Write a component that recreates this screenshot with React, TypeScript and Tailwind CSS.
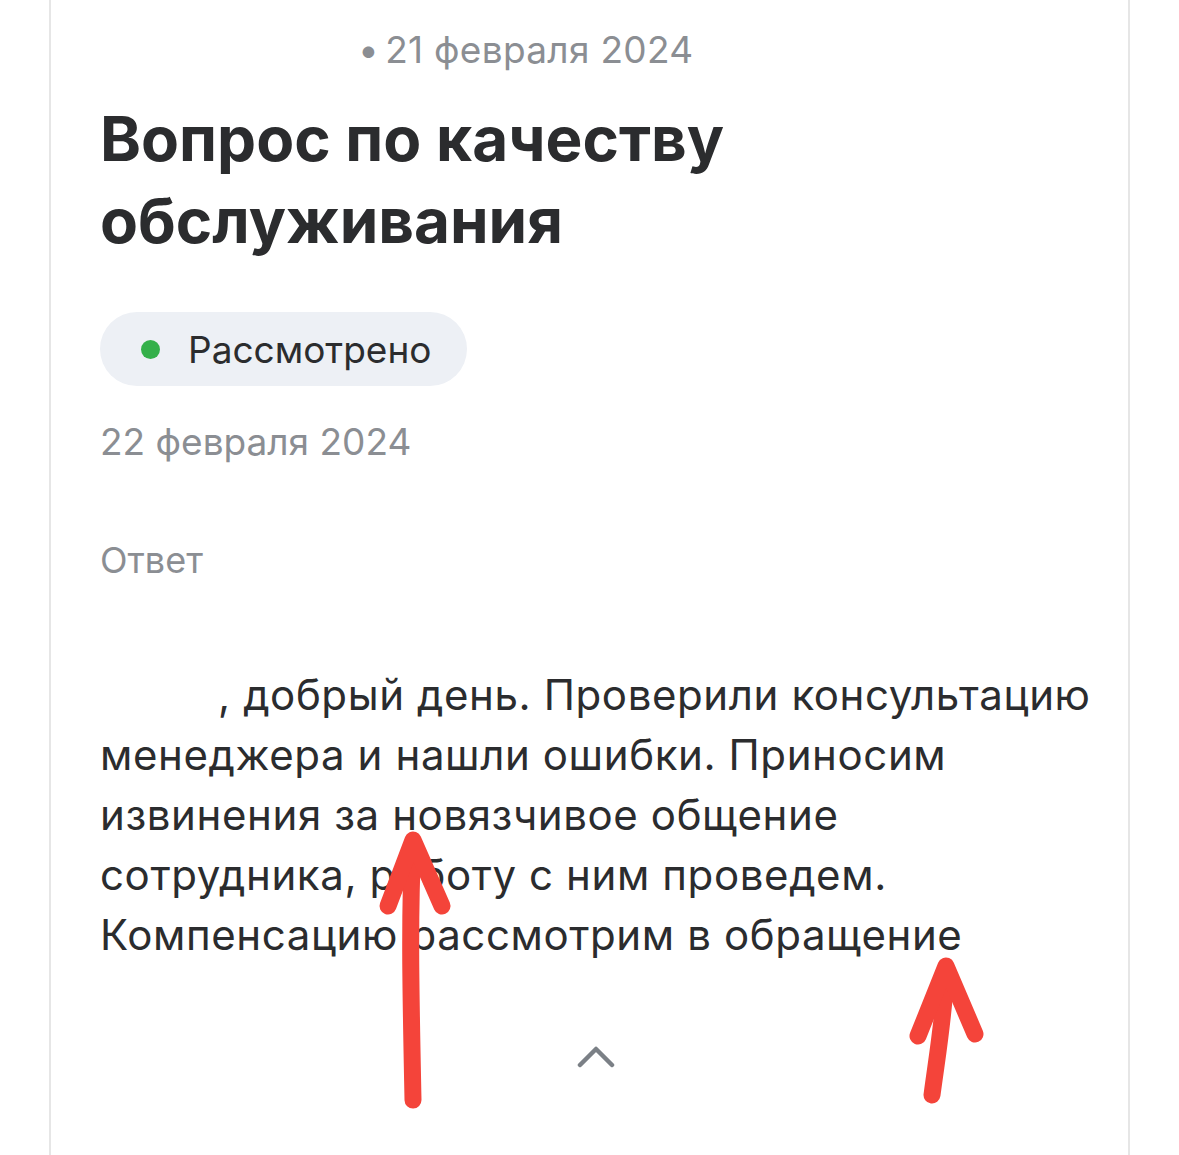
const answerLines = [
  "добрый день. Проверили консультацию",
  "менеджера и нашли ошибки. Приносим",
  "извинения за новязчивое общение",
  "сотрудника, работу с ним проведем.",
  "Компенсацию рассмотрим в обращение",
];

function ChevronUp() {
  return (
    <svg width="38" height="24" viewBox="0 0 38 24" fill="none">
      <path
        d="M3 20 L19 4 L35 20"
        stroke="#7b8086"
        strokeWidth="4.5"
        strokeLinecap="round"
        strokeLinejoin="round"
      />
    </svg>
  );
}

function Scribbles() {
  return (
    <svg
      className="pointer-events-none absolute left-0 top-0"
      width="1179"
      height="1155"
      viewBox="0 0 1179 1155"
      fill="none"
    >
      <g stroke="#f4443a" strokeWidth="17" strokeLinecap="round" strokeLinejoin="round">
        <path d="M413 1100 C411 1000 409 920 413 842" />
        <path d="M388 906 L413 840 L442 906" />
        <path d="M932 1095 C938 1050 945 1010 946 968" />
        <path d="M918 1036 L946 966 L975 1034" />
      </g>
    </svg>
  );
}

export default function App() {
  return (
    <div className="relative min-h-[1155px] overflow-hidden bg-white font-['Inter','Noto_Sans',sans-serif]">
      <div className="mx-[49px] min-h-[1155px] border-x-2 border-[#e6e6e6] pl-[49px] pr-[30px] pt-[28px]">
        <p className="text-[37px] leading-[44px] tracking-[0.3px] text-[#8b8e93]">
          <span className="inline-block w-[258px]" />
          <span className="mr-[6px]">•</span>21 февраля 2024
        </p>

        <h1 className="mt-[26px] text-[62px] font-bold leading-[82px] text-[#2b2c2e]">
          Вопрос по качеству
          <br />
          обслуживания
        </h1>

        <div className="mt-[50px] inline-flex h-[74px] items-center gap-[28px] rounded-full bg-[#edf0f5] pl-[41px] pr-[36px]">
          <span className="h-[19px] w-[19px] rounded-full bg-[#34b04a]" />
          <span className="text-[37px] leading-none text-[#2b2c2e]">Рассмотрено</span>
        </div>

        <p className="mt-[34px] text-[37px] leading-[44px] text-[#8b8e93]">22 февраля 2024</p>

        <p className="mt-[74px] text-[36px] leading-[44px] text-[#8b8e93]">Ответ</p>

        <div className="mt-[83px] text-[42px] leading-[60px] tracking-[0.6px] text-[#2b2c2e]">
          {answerLines.map((line, i) => (
            <p key={line} className="whitespace-nowrap">
              {i === 0 && (
                <>
                  <span className="inline-block w-[118px]" />,{" "}
                </>
              )}
              {line}
            </p>
          ))}
        </div>

        <div className="mt-[80px] flex justify-center pr-[6px]">
          <ChevronUp />
        </div>
      </div>
      <Scribbles />
    </div>
  );
}
